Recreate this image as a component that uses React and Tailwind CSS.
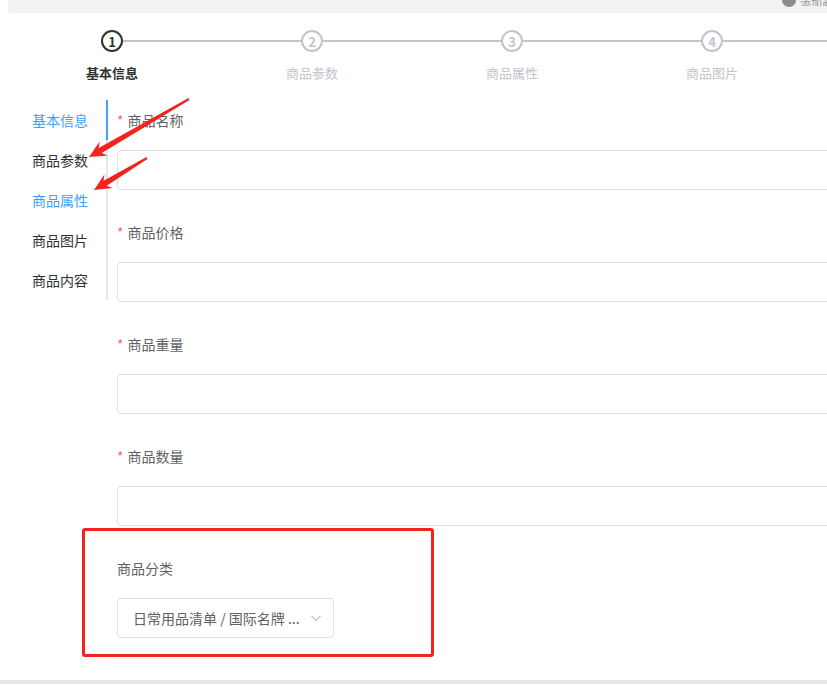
const steps = ["基本信息", "商品参数", "商品属性", "商品图片", "商品内容"];
const tabs = [
  { name: "基本信息", color: "text-[#409eff]" },
  { name: "商品参数", color: "text-[#303133]" },
  { name: "商品属性", color: "text-[#409eff]" },
  { name: "商品图片", color: "text-[#303133]" },
  { name: "商品内容", color: "text-[#303133]" },
];
const fields = ["商品名称", "商品价格", "商品重量", "商品数量"];

function arrowPoints(tx, ty, hx, hy) {
  const dx = hx - tx;
  const dy = hy - ty;
  const len = Math.hypot(dx, dy);
  const ux = dx / len;
  const uy = dy / len;
  const px = -uy;
  const py = ux;
  const head = 17;
  const bx = hx - ux * head;
  const by = hy - uy * head;
  const nx = hx - ux * (head - 4);
  const ny = hy - uy * (head - 4);
  const pts = [
    [tx + px * 1, ty + py * 1],
    [nx + px * 3, ny + py * 3],
    [bx + px * 8, by + py * 8],
    [hx, hy],
    [bx - px * 8, by - py * 8],
    [nx - px * 3, ny - py * 3],
    [tx - px * 1, ty - py * 1],
  ];
  return pts.map((p) => p[0].toFixed(1) + "," + p[1].toFixed(1)).join(" ");
}

function Steps() {
  return (
    <div className="flex pl-[12px] mt-[17px]">
      {steps.map((s, i) => (
        <div key={s} className="relative w-[200px] shrink-0 flex flex-col items-center">
          <div className="absolute top-[10px] left-[111px] w-[200px] h-[2px] bg-[#c0c4cc]"></div>
          <div
            className={
              "relative z-10 w-[22px] h-[22px] rounded-full border-2 bg-white flex items-center justify-center text-[13px] font-bold leading-none " +
              (i === 0 ? "border-[#303133] text-[#303133]" : "border-[#c0c4cc] text-[#c0c4cc]")
            }
          >
            {i + 1}
          </div>
          <div
            className={
              "mt-[13px] text-[13px] leading-[16px] " +
              (i === 0 ? "text-[#303133] font-bold" : "text-[#c0c4cc]")
            }
          >
            {s}
          </div>
        </div>
      ))}
    </div>
  );
}

export default function App() {
  return (
    <div
      className="relative w-[827px] h-[685px] overflow-hidden bg-white flex flex-col"
      style={{ fontFamily: '"Noto Sans CJK SC", "Noto Sans", sans-serif' }}
    >
      <div className="ml-2 h-[13px] bg-[#f2f2f2] rounded-bl-[4px] flex justify-end items-start shrink-0">
        <div className="w-[14px] h-[7px] rounded-b-full bg-[#8c8c8c] mr-[4px]"></div>
        <div className="text-[11px] leading-[6px] text-[#909399] w-[27px] overflow-hidden whitespace-nowrap h-[6px]">添加商品</div>
      </div>
      <Steps />
      <div className="flex mt-[19px]">
        <div className="w-[108px] shrink-0">
          <div className="border-r-2 border-[#e4e7ed] relative">
            {tabs.map((t) => (
              <div
                key={t.name}
                className={"h-[40px] flex items-center justify-end pr-[18px] text-[14px] " + t.color}
              >
                {t.name}
              </div>
            ))}
            <div className="absolute right-[-2px] top-0 w-[2px] h-[40px] bg-[#409eff]"></div>
          </div>
        </div>
        <div className="pl-[9px] w-[760px] shrink-0">
          {fields.map((f) => (
            <div key={f} className="mb-[22px]">
              <div className="h-[40px] flex items-center text-[14px] text-[#606266]">
                <span className="text-[#f56c6c] mr-[4px]">*</span>
                {f}
              </div>
              <div className="mt-[10px] h-[40px] border border-[#dcdfe6] rounded-[4px] bg-white"></div>
            </div>
          ))}
          <div>
            <div className="h-[40px] flex items-center text-[14px] text-[#606266]">商品分类</div>
            <div className="mt-[10px] w-[217px] h-[40px] border border-[#dcdfe6] rounded-[4px] flex items-center pl-[15px] pr-[10px] text-[14px] text-[#606266]">
              <span className="flex-1 whitespace-nowrap overflow-hidden">日常用品清单 / 国际名牌 ...</span>
              <svg width="14" height="14" viewBox="0 0 14 14" className="ml-[4px]">
                <path d="M2.5 5 L7 9.5 L11.5 5" fill="none" stroke="#c0c4cc" strokeWidth="1.2" />
              </svg>
            </div>
          </div>
        </div>
      </div>
      <div className="mt-auto h-[4px] bg-[#e4e7ed] mb-[1px]"></div>
      <div className="absolute left-[82px] top-[528px] w-[352px] h-[129px] border-[3px] border-[#f5231d] rounded-[3px] pointer-events-none"></div>
      <svg className="absolute left-0 top-0 pointer-events-none" width="827" height="685">
        <polygon points={arrowPoints(189, 99, 89, 157)} fill="#f5231d" />
        <polygon points={arrowPoints(147, 158, 94, 190)} fill="#f5231d" />
      </svg>
    </div>
  );
}
